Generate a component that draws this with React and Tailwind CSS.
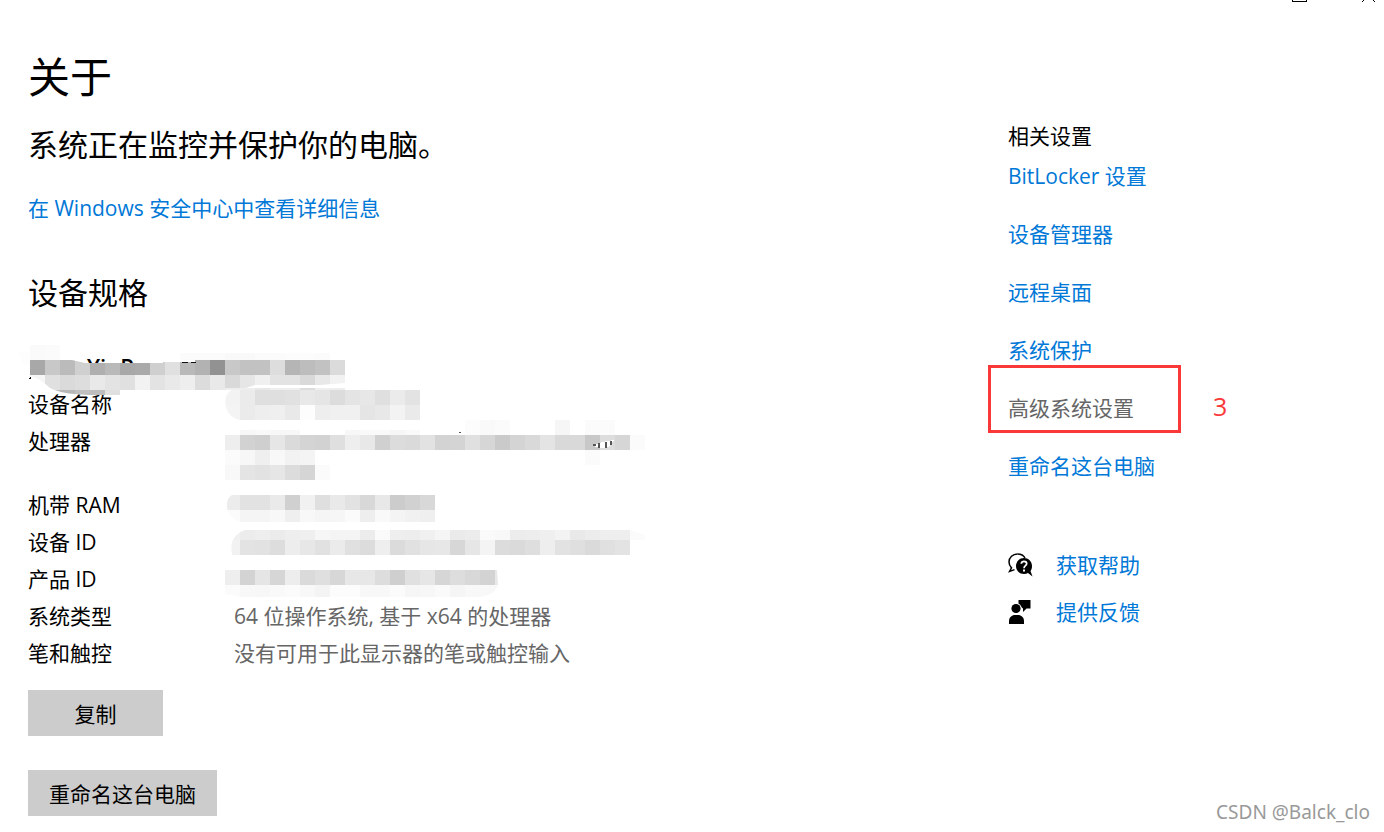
import React from "react";

const CELL = 15;

// Redacted areas: each strip is a row of grey cells, 15px wide
const strips = [
  { x: 30, y: 0, h: 15, cells: "fa fb" },
  { x: 180, y: 8, h: 7, cells: "fb fb fb f9 f9 fb fb fc fc fb" },
  { x: 30, y: 15, h: 15, cells: "a8 c8 bb d0 af b9 a8 aa cf e0 b9 b2 92 c8 c2 c2 dd b5 bd c2 db", clip: "name" },
  { x: 30, y: 30, h: 15, cells: "f6 e0 da dd e9 e3 e0 f2 e3 e9 ee dc e9 d9 e6 f0 e3 e3 d9 e8 f2", clip: "name" },
  { x: 30, y: 45, h: 5, cells: "c8 bb b7 c0 bd e0", clip: "name" },
  { x: 225, y: 43, h: 2, cells: "ee ee e8 ee ee dc ee ee" },
  { x: 225, y: 45, h: 15, cells: "f3 eb df df e1 e8 e5 dc e4 e7 df eb e3", clip: "device" },
  { x: 225, y: 60, h: 15, cells: "f4 eb ee ef e9 fd ee f0 f0 e5 e8 f3 ea", clip: "device" },
  { x: 465, y: 75, h: 15, cells: "fc f9 fb ff ff ff f6 ff fb fb" },
  { x: 240, y: 85, h: 5, cells: "f7 f9 f7 f7 ff ff ff f7 f9 f9 f6 f9" },
  { x: 225, y: 90, h: 15, cells: "ee d2 cf e6 da d4 d2 df ee e8 d0 dc da e2 d3 d4 e0 d6 ca d4 d9 e4 d9 d9 c8 dd d6 fb" },
  { x: 225, y: 105, h: 15, cells: "fb f7 ef f8 f2 f4" },
  { x: 585, y: 105, h: 15, cells: "fb" },
  { x: 225, y: 120, h: 15, cells: "f8 e4 e2 e6 dc d5 fb" },
  { x: 225, y: 150, h: 15, cells: "ec e2 e2 ea d0 f1 df e9 e2 d8 e8 cc d1 d8", clip: "ram" },
  { x: 225, y: 165, h: 12, cells: "fb f5 f5 f8 ef f8 f5 f6 fb ee f9 f4 f1 ef", clip: "ram" },
  { x: 225, y: 185, h: 10, cells: "f0 ec ee eb ee ef f6 f4 f4 ec fa ee ed f0 f5 ea ec fa f8 ec ed ef f3 e9 ec ee ee fb", clip: "id" },
  { x: 225, y: 195, h: 15, cells: "f2 e3 e2 dd ed e7 e1 eb e0 dc ee db e1 e6 e7 d7 e6 f4 dc da de ee e2 df da e0 e3", clip: "id" },
  { x: 225, y: 225, h: 15, cells: "ee d3 e5 d6 ed da df d7 e7 e7 dd cf e0 e6 d6 dd d8 d3 e8", clip: "product" },
  { x: 225, y: 240, h: 12, cells: "fb f8 f7 f9 fb f8 f4 fc fc f8 f8 fb f6 f7 fa f5 f8 f8 f8", clip: "product" },
];

const specs = [
  { label: "设备名称", value: "" },
  { label: "处理器", value: "", tall: true },
  { label: "机带 RAM", value: "" },
  { label: "设备 ID", value: "" },
  { label: "产品 ID", value: "" },
  { label: "系统类型", value: "64 位操作系统, 基于 x64 的处理器" },
  { label: "笔和触控", value: "没有可用于此显示器的笔或触控输入" },
];

const Mosaic = () => (
  <svg
    className="absolute left-0 top-0 pointer-events-none"
    width="660"
    height="260"
    shapeRendering="crispEdges"
    aria-hidden="true"
  >
    <defs>
      <clipPath id="name">
        <path d="M30 15H72L85 18H163V17H195V15H345V38L320 40H255L240 45H120V50H95C75 50 60 48 50 43C42 36 38 33 30 31Z" />
      </clipPath>
      <clipPath id="device">
        <path d="M240 45H420V75H240C222 72 222 48 232 45Z" />
      </clipPath>
      <clipPath id="ram">
        <path d="M232 150H435V177H242C224 174 224 154 232 150Z" />
      </clipPath>
      <clipPath id="id">
        <path d="M245 185H630L645 190V195H630V210H232C230 197 233 190 245 185Z" />
      </clipPath>
      <clipPath id="product">
        <path d="M225 225H497L498 240C495 248 490 250 480 252H240L225 249Z" />
      </clipPath>
    </defs>
    {strips.map((s) => (
      <g key={`${s.x}-${s.y}`} clipPath={s.clip ? `url(#${s.clip})` : undefined}>
        {s.cells.split(" ").map((c, i) => (
          <rect key={i} x={s.x + i * CELL} y={s.y} width={CELL} height={s.h} fill={`#${c}${c}${c}`} />
        ))}
      </g>
    ))}
    <path d="M18 7H30V20H24Z" fill="#fdfdfd" />
    <path d="M28 34L31 32V34Z" fill="#111" />
    <path d="M182 17h14" stroke="#111" strokeWidth="1" strokeDasharray="6 3" />
    <path d="M593 100L602 97L614 95L610 101L605 103L595 102Z" fill="#fff" />
    <path d="M593 100h3M599 98v5M606 97v6M611 96v4" stroke="#555" strokeWidth="2" />
    <path d="M459 87h2" stroke="#555" />
  </svg>
);

const HelpIcon = () => (
  <svg width="26" height="26" viewBox="0 0 26 26" aria-hidden="true">
    <path
      d="M9.500 1C4.800 1 1 4.500 1 9C1 11.500 2 13.400 3.500 14.900L1.500 18.500L6.500 16.600"
      fill="none"
      stroke="#000"
      strokeWidth="1.500"
    />
    <path d="M9.500 1C13 1 15.800 2.700 17 5" fill="none" stroke="#000" strokeWidth="1.500" />
    <path
      d="M16 5C11.600 5 8 8.500 8 13C8 17.500 11.600 21 16 21C17.500 21 18.900 20.700 20 20L24.500 23.500L22.500 18C23.500 16.600 24 14.900 24 13C24 8.500 20.400 5 16 5Z"
      fill="#000"
    />
    <path
      d="M13.300 10.800C13.300 9.200 14.500 8.300 16 8.300C17.600 8.300 18.700 9.300 18.700 10.700C18.700 12.700 16 12.700 16 15.200"
      fill="none"
      stroke="#fff"
      strokeWidth="1.700"
    />
    <rect x="15" y="16.500" width="2" height="2" fill="#fff" />
  </svg>
);

const FeedbackIcon = () => (
  <svg width="26" height="26" viewBox="0 0 26 26" aria-hidden="true">
    <path d="M10.500 0H22.500V8.500H18.500L15 12V8.500L10.500 5Z" fill="#000" />
    <circle cx="8" cy="8.500" r="5.600" fill="#fff" />
    <circle cx="8" cy="8.500" r="4.600" fill="#000" />
    <path d="M1 24V21C1 17.500 3.800 15 7 15H10C13.200 15 16 17.500 16 21V24Z" fill="#000" />
  </svg>
);

const linkClass = "text-[#0078d7] hover:text-[#666666]";

const App = () => {
  return (
    <div className="relative min-h-screen bg-white text-black text-[21px] leading-[27px] font-['Open_Sans','Noto_Sans_CJK_SC',sans-serif]">
      <header className="flex justify-end gap-[54px] h-[3px] pr-2">
        <button type="button" aria-label="最大化" className="block w-[15px] h-[2px] border border-t-0 border-black"></button>
        <button type="button" aria-label="关闭" className="block w-[15px] h-[3px]">
          <svg width="15" height="3" viewBox="0 0 15 3" aria-hidden="true">
            <path d="M3 0L1 2M12 0L14 2" stroke="#000" />
          </svg>
        </button>
      </header>

      <div className="flex">
        <main className="flex-1 min-w-0 pb-4">
          <div className="pl-7">
            <h1 className="pt-[46px] text-[42px] leading-[56px]">关于</h1>
            <h2 className="mt-5 text-[30px] leading-[40px]">系统正在监控并保护你的电脑。</h2>
            <a href="#security" className={`block mt-[30px] ${linkClass}`}>
              在 Windows 安全中心中查看详细信息
            </a>
            <h2 className="mt-[51px] text-[30px] leading-[40px]">设备规格</h2>
          </div>

          <section className="relative mt-8 pt-[7px]">
            <h3 className="pl-[87px] text-[22px] leading-[28px] font-semibold">YinP</h3>
            <table className="ml-7 mt-[6px]">
              <tbody>
                {specs.map((s) => (
                  <tr key={s.label} className={s.tall ? "h-16" : "h-[37px]"}>
                    <th scope="row" className="w-[206px] py-[5px] text-left align-top font-normal">
                      {s.label}
                    </th>
                    <td className="py-[5px] align-top text-[#666666]">{s.value}</td>
                  </tr>
                ))}
              </tbody>
            </table>
            <Mosaic />
          </section>

          <div className="flex flex-col items-start gap-[34px] pl-7 mt-[18px]">
            <button type="button" className="w-[135px] h-[46px] pt-[2px] bg-[#cccccc]">
              复制
            </button>
            <button type="button" className="w-[189px] h-[46px] pt-[2px] bg-[#cccccc]">
              重命名这台电脑
            </button>
          </div>
        </main>

        <aside className="w-94 shrink-0 pt-[120px]">
          <h2>相关设置</h2>
          <nav className="flex flex-col items-start gap-[31px] mt-[13px]">
            <a href="#bitlocker" className={linkClass}>BitLocker 设置</a>
            <a href="#devices" className={linkClass}>设备管理器</a>
            <a href="#remote" className={linkClass}>远程桌面</a>
            <a href="#protection" className={linkClass}>系统保护</a>
            <div className="relative">
              <a href="#advanced" className="text-[#666666]">高级系统设置</a>
              <div className="absolute -left-5 -top-[30px] w-[193px] h-[68px] border-3 border-[#fa3838] pointer-events-none"></div>
              <span className="absolute left-[205px] -top-[2px] text-[25px] text-[#fa3838]">3</span>
            </div>
            <a href="#rename" className={linkClass}>重命名这台电脑</a>
          </nav>
          <div className="flex flex-col items-start gap-5 mt-[72px]">
            <a href="#help" className={`flex items-center gap-[22px] ${linkClass}`}>
              <HelpIcon />
              获取帮助
            </a>
            <a href="#feedback" className={`flex items-center gap-[22px] ${linkClass}`}>
              <FeedbackIcon />
              提供反馈
            </a>
          </div>
        </aside>
      </div>

      <p className="absolute right-[14px] bottom-[6px] text-[19px] text-[#999999] font-['Noto_Sans',sans-serif]">
        CSDN @Balck_clo
      </p>
    </div>
  );
};

export default App;
